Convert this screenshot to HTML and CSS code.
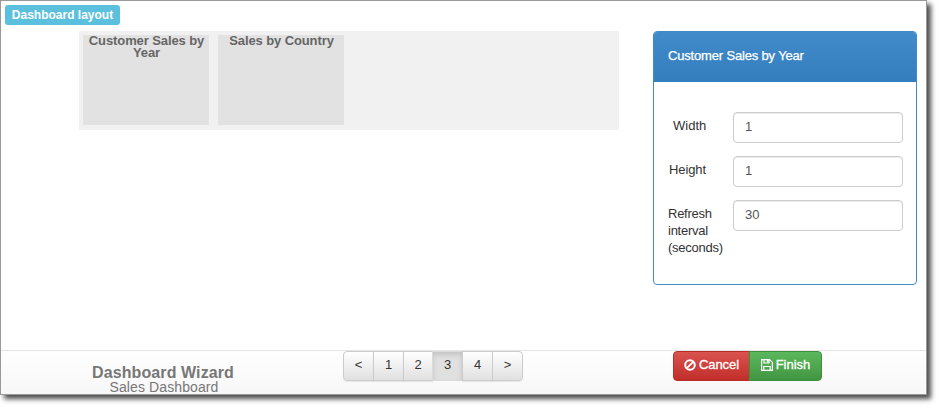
FILE: index.html
```html
<!DOCTYPE html>
<html lang="en">
<head>
<meta charset="utf-8">
<title>Dashboard Wizard</title>
<link rel="stylesheet" href="styles.css">
</head>
<body>
<div class="window">
  <main class="content">
    <div class="layout-area">
      <span class="badge">Dashboard layout</span>
      <div class="board">
        <div class="tile">Customer Sales by<br>Year</div>
        <div class="tile">Sales by Country</div>
      </div>
    </div>
    <section class="panel">
      <header class="panel-heading"><span>Customer Sales by Year</span></header>
      <form class="panel-body">
        <div class="row"><label class="label-width" for="w">Width</label><input id="w" value="1"></div>
        <div class="row"><label class="label-height" for="h">Height</label><input id="h" value="1"></div>
        <div class="row"><label class="label-refresh" for="r">Refresh interval (seconds)</label><input id="r" value="30"></div>
      </form>
    </section>
  </main>
  <footer class="footer">
    <div class="caption"><strong>Dashboard Wizard</strong><span>Sales Dashboard</span></div>
    <nav class="pager">
      <button>&lt;</button><button>1</button><button>2</button><button class="active">3</button><button>4</button><button>&gt;</button>
    </nav>
    <div class="actions">
      <button class="cancel"><svg width="12" height="12" viewBox="0 0 12 12"><circle cx="6" cy="6" r="4.8" fill="none" stroke="#fff" stroke-width="2"/><path d="M2.8 9.2 9.2 2.8" stroke="#fff" stroke-width="1.8"/></svg><span>Cancel</span></button>
      <button class="finish"><svg width="12" height="12" viewBox="0 0 12 12"><path d="M.6.6H8.6L11.4 3.4V11.4H.6Z M3 .8V4H8V.8 M2.8 11V7.5H9.2V11" fill="none" stroke="#fff" stroke-width="1.2"/><path d="M5.8.8H7.6V3.4H5.8Z" fill="#fff"/></svg><span>Finish</span></button>
    </div>
  </footer>
</div>
</body>
</html>
```
FILE: styles.css
```css
* { box-sizing: border-box; }
body {
  margin: 0;
  height: 410px;
  background: #fff;
  font: 13px/17px "Liberation Sans", Arial, sans-serif;
  color: #333;
  overflow: hidden;
}
.window {
  width: 927px;
  height: 395px;
  border: 1px solid #999;
  background: #fff;
  box-shadow: 4px 4px 5px rgba(0, 0, 0, .7);
  display: flex;
  flex-direction: column;
}
.content { height: 349px; display: flex; }
.layout-area { width: 652px; padding: 4px 0 0 4px; }
.badge {
  display: block;
  width: 115px;
  height: 20px;
  border-radius: 3px;
  background: #5bc0de;
  color: #fff;
  font-weight: bold;
  font-size: 12px;
  line-height: 20px;
  text-align: center;
  white-space: nowrap;
}
.board {
  width: 540px;
  height: 99px;
  margin: 6px 0 0 74px;
  padding: 4px;
  background: #f1f1f1;
  display: flex;
  gap: 9px;
}
.tile {
  width: 126px;
  height: 90px;
  padding-left: 1px;
  background: #e2e2e2;
  color: #666;
  font-weight: bold;
  font-size: 13px;
  line-height: 12px;
  letter-spacing: -.1px;
  text-align: center;
  white-space: nowrap;
}
.panel {
  width: 264px;
  height: 254px;
  margin-top: 30px;
  border: 1px solid #428bca;
  border-radius: 4px;
  overflow: hidden;
}
.panel-heading {
  height: 50px;
  padding: 15px 14px;
  background: linear-gradient(#428bca, #357ebd);
  color: #fff;
  letter-spacing: -.17px;
  -webkit-text-stroke: .25px #fff;
  white-space: nowrap;
}
.panel-body { padding: 30px 13px 0 14px; display: flex; flex-direction: column; gap: 13px; }
.row { display: flex; height: 31px; }
.row label { width: 65px; flex: none; padding-top: 5px; height: 60px; }
.row .label-width { padding-left: 5px; }
.row .label-height { padding-left: 1px; letter-spacing: -.1px; }
.row .label-refresh { letter-spacing: -.25px; }
.row input {
  width: 170px;
  height: 31px;
  border: 1px solid #ccc;
  border-radius: 4px;
  padding: 0 11px 2px;
  font: inherit;
  color: #555;
  box-shadow: inset 0 1px 1px rgba(0, 0, 0, .075);
}
.footer {
  height: 44px;
  border-top: 1px solid #e5e5e5;
  background: linear-gradient(#fff, #f7f7f7);
  display: flex;
  align-items: flex-start;
}
.caption {
  width: 342px;
  padding: 14px 18px 0 0;
  display: flex;
  flex-direction: column;
  align-items: center;
  color: #777;
  white-space: nowrap;
}
.caption strong { font-size: 16px; line-height: 15px; letter-spacing: .1px; }
.caption span { font-size: 14px; line-height: 14px; letter-spacing: .1px; padding-left: 2px; }
button { font: inherit; height: 30px; padding: 0 0 3px; }
.pager { display: flex; width: 330px; }
.pager button {
  width: 31px;
  margin-right: -1px;
  border: 1px solid #ccc;
  background: linear-gradient(#fff, #e0e0e0);
  color: #333;
  box-shadow: inset 0 1px 0 rgba(255, 255, 255, .15), 0 1px 1px rgba(0, 0, 0, .075);
}
.pager button:nth-child(3) { width: 30px; }
.pager button:first-child { border-radius: 4px 0 0 4px; }
.pager button:last-child { border-radius: 0 4px 4px 0; }
.pager .active { background: #e0e0e0; border-color: #dbdbdb; box-shadow: inset 0 3px 5px rgba(0, 0, 0, .125); }
.actions { display: flex; }
.actions button {
  display: flex;
  align-items: center;
  justify-content: center;
  gap: 3px;
  color: #fff;
  -webkit-text-stroke: .3px #fff;
  white-space: nowrap;
}
.actions .cancel {
  width: 77px;
  border: 1px solid #b92c28;
  border-radius: 4px 0 0 4px;
  background: linear-gradient(#d9534f, #c12e2a);
  letter-spacing: -.1px;
}
.actions .finish {
  width: 73px;
  margin-left: -1px;
  border: 1px solid #3e8f3e;
  border-radius: 0 4px 4px 0;
  background: linear-gradient(#5cb85c, #419641);
}
```
